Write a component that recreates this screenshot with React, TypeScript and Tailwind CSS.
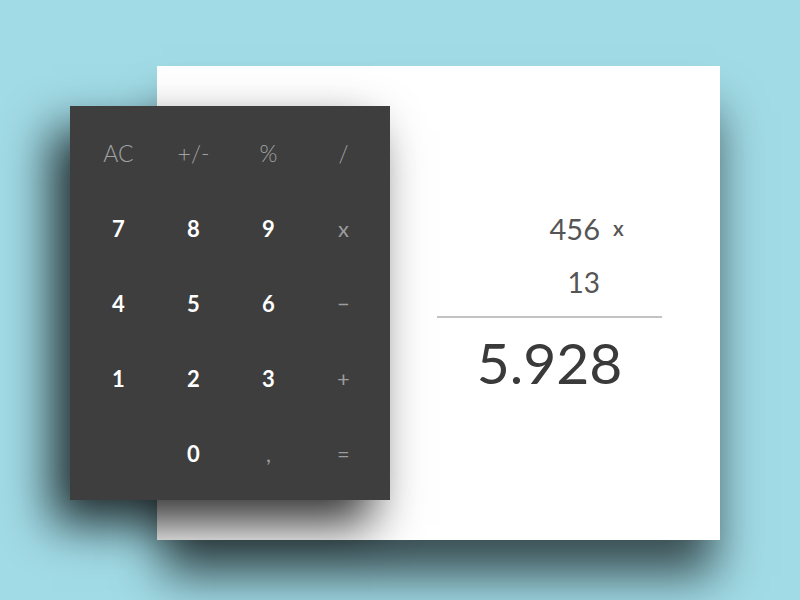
import React from 'react';

type Key = { label: string; kind: 'fn' | 'num' | 'op' | 'empty' };

const keys: Key[] = [
  { label: 'AC', kind: 'fn' },
  { label: '+/-', kind: 'fn' },
  { label: '%', kind: 'fn' },
  { label: '/', kind: 'fn' },
  { label: '7', kind: 'num' },
  { label: '8', kind: 'num' },
  { label: '9', kind: 'num' },
  { label: 'x', kind: 'op' },
  { label: '4', kind: 'num' },
  { label: '5', kind: 'num' },
  { label: '6', kind: 'num' },
  { label: '−', kind: 'op' },
  { label: '1', kind: 'num' },
  { label: '2', kind: 'num' },
  { label: '3', kind: 'num' },
  { label: '+', kind: 'op' },
  { label: '', kind: 'empty' },
  { label: '0', kind: 'num' },
  { label: ',', kind: 'op' },
  { label: '=', kind: 'op' },
];

function Keypad() {
  return (
    <div className="absolute left-[-87px] top-[40px] w-[320px] h-[394px] bg-[#3e3e3e] pt-[10px] pl-[11px] shadow-[-18px_24px_45px_rgba(0,0,0,0.8)]">
      <div className="grid grid-cols-[repeat(4,75px)] grid-rows-[repeat(5,75px)]">
        {keys.map((k, i) => (
          <button
            key={i}
            className={`flex items-center justify-center leading-none ${
              k.kind === 'num'
                ? 'text-white font-bold text-[22px]'
                : k.kind === 'fn'
                ? 'text-[#a3a3a3] font-light text-[23px]'
                : 'text-[#9c9c9c] font-normal text-[22px]'
            }`}
          >
            {k.label}
          </button>
        ))}
      </div>
    </div>
  );
}

function Display() {
  return (
    <div className="ml-[280px] pt-[145px] w-[225px] flex flex-col">
      <div className="grid grid-cols-[1fr_62px] items-center text-[#555555]">
        <span className="text-right text-[29px] leading-[36px]">456</span>
        <span className="relative top-[-1px] pl-[13px] text-[21px] leading-[36px] font-semibold">x</span>
      </div>
      <div className="grid grid-cols-[1fr_62px] mt-[17px] text-[#555555]">
        <span className="text-right text-[28px] leading-[36px]">13</span>
        <span />
      </div>
      <div className="mt-[16px] h-[2px] bg-[#c2c2c2]" />
      <div className="mt-[12px] text-center text-[57px] leading-[64px] text-[#3a3a3a]">5.928</div>
    </div>
  );
}

export default function App() {
  return (
    <div
      className="w-[800px] h-[600px] bg-[#a1dbe6] overflow-hidden pt-[66px] pl-[157px]"
      style={{ fontFamily: 'Lato, "Open Sans", sans-serif' }}
    >
      <div className="relative w-[563px] h-[474px] bg-white shadow-[0_40px_45px_-5px_rgba(0,0,0,0.65)]">
        <Keypad />
        <Display />
      </div>
    </div>
  );
}
